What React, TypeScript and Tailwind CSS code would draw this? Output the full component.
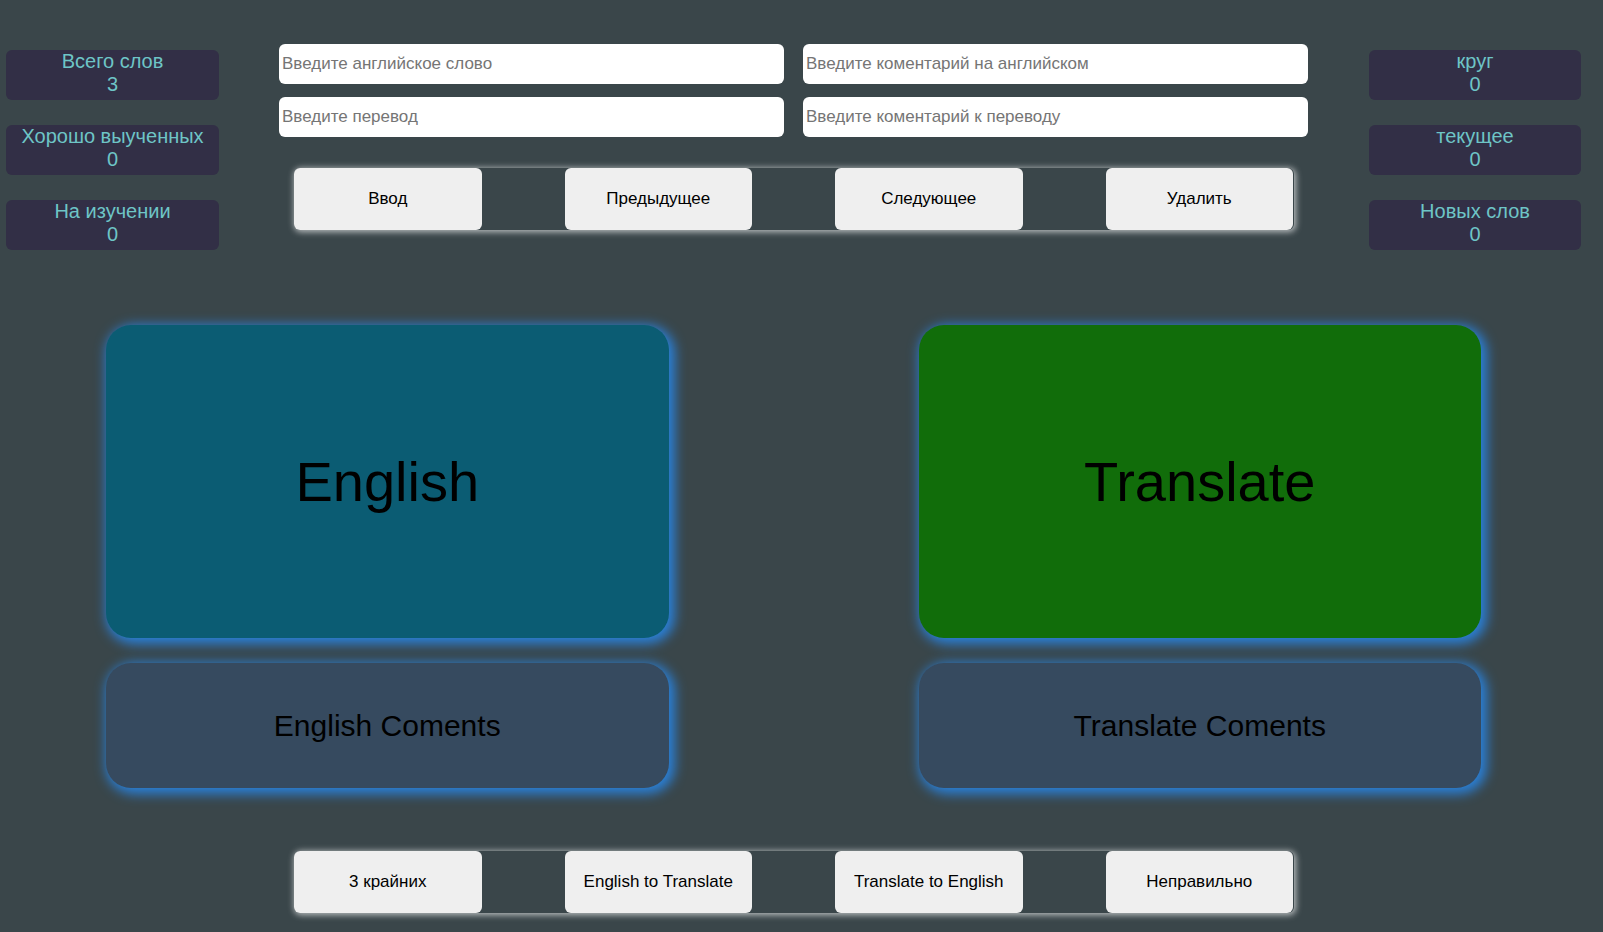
import React from "react";

type Stat = { label: string; value: number };

const leftStats: Stat[] = [
  { label: "Всего слов", value: 3 },
  { label: "Хорошо выученных", value: 0 },
  { label: "На изучении", value: 0 },
];

const rightStats: Stat[] = [
  { label: "круг", value: 0 },
  { label: "текущее", value: 0 },
  { label: "Новых слов", value: 0 },
];

const fields = [
  "Введите английское слово",
  "Введите коментарий на английском",
  "Введите перевод",
  "Введите коментарий к переводу",
];

function StatColumn({ stats }: { stats: Stat[] }) {
  return (
    <aside className="flex flex-col gap-[25px] pt-1.5">
      {stats.map((s) => (
        <div
          key={s.label}
          className="h-[50px] rounded-md bg-[#322f46] text-center text-[20px] leading-[23px] text-[#6ec5c6]"
        >
          <p>{s.label}</p>
          <p>{s.value}</p>
        </div>
      ))}
    </aside>
  );
}

function ButtonRow({ labels }: { labels: string[] }) {
  return (
    <div className="grid grid-cols-4 gap-[83px] rounded-md pr-px shadow-[1px_1px_6px_1px_rgba(255,255,255,0.65)]">
      {labels.map((l) => (
        <button key={l} type="button" className="h-[62px] rounded-md bg-[#efefef] text-[17px] text-black">
          {l}
        </button>
      ))}
    </div>
  );
}

function Card({ title, comment, color }: { title: string; comment: string; color: string }) {
  return (
    <section className="flex flex-col gap-[25px] text-black">
      <div
        className={`flex h-[313px] items-center justify-center rounded-[25px] text-[56px] shadow-[3px_3px_12px_3px_#2a80d8] ${color}`}
      >
        <h2>{title}</h2>
      </div>
      <div className="flex h-[125px] items-center justify-center rounded-[25px] bg-[#364a5f] text-[30px] shadow-[3px_3px_12px_3px_#2a80d8]">
        <p>{comment}</p>
      </div>
    </section>
  );
}

export default function App() {
  return (
    <main className="min-h-screen bg-[#3a464a] pt-11 pr-[22px] pb-[19px] pl-1.5 font-['Liberation_Sans',Arial,sans-serif]">
      <div className="grid grid-cols-[213px_minmax(0,1fr)_212px]">
        <StatColumn stats={leftStats} />
        <form className="pr-[61px] pl-[60px]" onSubmit={(e) => e.preventDefault()}>
          <div className="grid grid-cols-2 gap-x-[19px] gap-y-[13px]">
            {fields.map((f) => (
              <input
                key={f}
                type="text"
                aria-label={f}
                placeholder={f}
                className="h-10 w-full rounded-md bg-white px-[3px] text-[17px] text-black placeholder:text-[#757575]"
              />
            ))}
          </div>
          <div className="pt-[31px] pr-[14px] pl-[15px]">
            <ButtonRow labels={["Ввод", "Предыдущее", "Следующее", "Удалить"]} />
          </div>
        </form>
        <StatColumn stats={rightStats} />
      </div>
      <div className="grid grid-cols-2 gap-x-[250px] px-[100px] pt-[75px]">
        <Card title="English" comment="English Coments" color="bg-[#0b5c73]" />
        <Card title="Translate" comment="Translate Coments" color="bg-[#116d0a]" />
      </div>
      <div className="pt-[63px] pr-[287px] pl-[288px]">
        <ButtonRow labels={["3 крайних", "English to Translate", "Translate to English", "Неправильно"]} />
      </div>
    </main>
  );
}
